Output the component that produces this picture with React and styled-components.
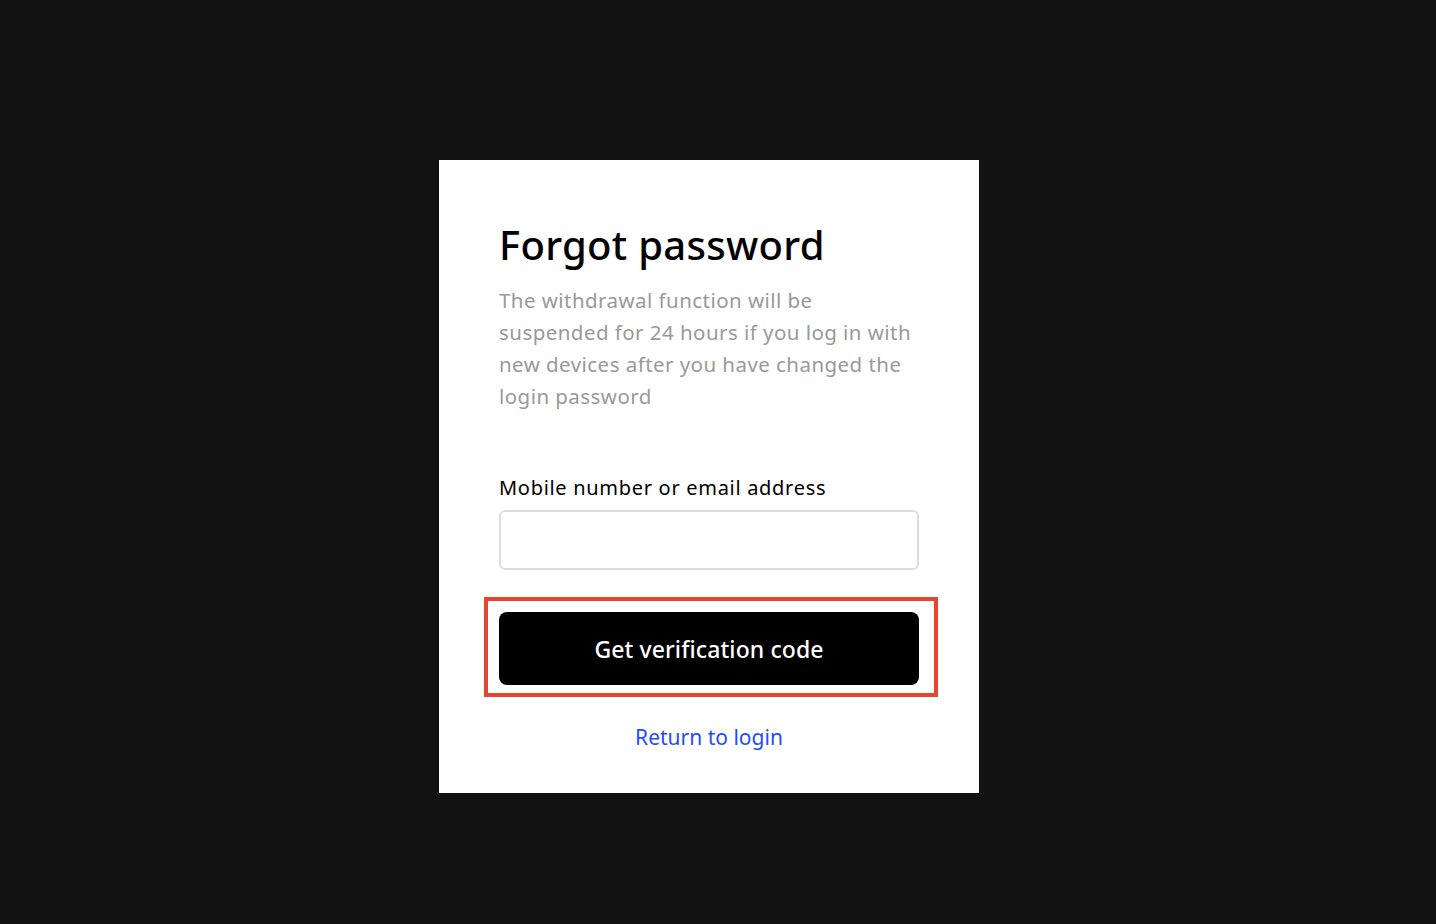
import React from 'react'
import styled, { createGlobalStyle } from 'styled-components'

const GlobalStyle = createGlobalStyle`
  html, body {
    margin: 0;
    padding: 0;
    background: #121212;
  }
  body {
    font-family: "Noto Sans", "Open Sans", sans-serif;
  }
  * { box-sizing: border-box; }
`

export default function App() {
  return (
    <Page>
      <GlobalStyle />
      <Card>
        <Title>Forgot password</Title>
        <Description>
          The withdrawal function will be suspended for 24 hours if you log in with new devices after you have changed the login password
        </Description>
        <Field>
          <Label htmlFor="account">Mobile number or email address</Label>
          <Input id="account" type="text" />
        </Field>
        <ButtonWrap>
          <Highlight />
          <SubmitButton>Get verification code</SubmitButton>
        </ButtonWrap>
        <ReturnLink href="#">Return to login</ReturnLink>
      </Card>
    </Page>
  )
}

const Page = styled.div`
  min-height: 924px;
  padding: 160px 0 0 439px;
`

const Card = styled.div`
  width: 540px;
  background: #fff;
  padding: 61px 60px 42px;
  display: flex;
  flex-direction: column;
`

const Title = styled.h1`
  margin: 0;
  font-size: 40px;
  line-height: 48px;
  font-weight: 500;
  color: #000;
  letter-spacing: 0.3px;
`

const Description = styled.p`
  margin: 15px 0 0;
  max-width: 416px;
  font-size: 20.5px;
  letter-spacing: 0.45px;
  line-height: 32px;
  color: #999;
  font-weight: 400;
`

const Field = styled.div`
  margin-top: 62px;
  display: flex;
  flex-direction: column;
  gap: 8px;
`

const Label = styled.label`
  font-size: 20px;
  letter-spacing: 0.7px;
  line-height: 28px;
  color: #000;
`

const Input = styled.input`
  height: 60px;
  width: 100%;
  border: 2px solid #ddd;
  border-radius: 6px;
  outline: none;
  font-size: 18px;
  padding: 0 16px;
`

const ButtonWrap = styled.div`
  position: relative;
  margin-top: 42px;
`

const Highlight = styled.div`
  position: absolute;
  left: -15px;
  top: -15px;
  right: -19px;
  bottom: -12px;
  border: 4px solid #e8452c;
  pointer-events: none;
`

const SubmitButton = styled.button`
  display: block;
  width: 100%;
  height: 73px;
  border: none;
  border-radius: 8px;
  background: #000;
  color: #fff;
  font-family: inherit;
  font-size: 23px;
  font-weight: 500;
  letter-spacing: 0.1px;
  cursor: pointer;
`

const ReturnLink = styled.a`
  margin-top: 38px;
  align-self: center;
  font-size: 21px;
  line-height: 28px;
  color: #1f4dff;
  text-decoration: none;
`
